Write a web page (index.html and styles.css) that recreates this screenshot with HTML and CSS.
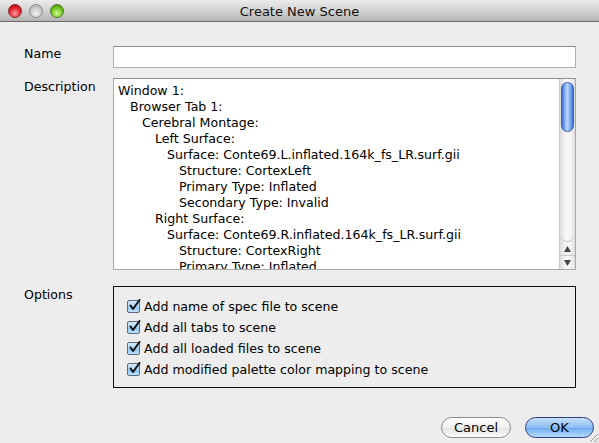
FILE: index.html
```html
<!DOCTYPE html>
<html>
<head>
<meta charset="utf-8">
<link rel="stylesheet" href="styles.css">
</head>
<body>
<div class="window">
  <div class="titlebar">
    <div class="lights">
      <span class="light red"></span>
      <span class="light gray"></span>
      <span class="light green"></span>
    </div>
    <div class="title">Create New Scene</div>
  </div>
  <div class="content">
    <div class="row name-row">
      <div class="label">Name</div>
      <div class="input"></div>
    </div>
    <div class="row desc-row">
      <div class="label">Description</div>
      <div class="textarea">
        <div class="text">
          <div class="l0">Window 1:</div>
          <div class="l1">Browser Tab 1:</div>
          <div class="l2">Cerebral Montage:</div>
          <div class="l3">Left Surface:</div>
          <div class="l4">Surface: Conte69.L.inflated.164k_fs_LR.surf.gii</div>
          <div class="l5">Structure: CortexLeft</div>
          <div class="l5">Primary Type: Inflated</div>
          <div class="l5">Secondary Type: Invalid</div>
          <div class="l3">Right Surface:</div>
          <div class="l4">Surface: Conte69.R.inflated.164k_fs_LR.surf.gii</div>
          <div class="l5">Structure: CortexRight</div>
          <div class="l5">Primary Type: Inflated</div>
        </div>
        <div class="scrollbar">
          <div class="track">
            <div class="thumb"></div>
          </div>
          <div class="arrow up"><svg width="7" height="6" viewBox="0 0 7 6"><path d="M3.5 0 L7 6 L0 6 Z" fill="#444"/></svg></div>
          <div class="arrow down"><svg width="7" height="6" viewBox="0 0 7 6"><path d="M0 0 L7 0 L3.5 6 Z" fill="#444"/></svg></div>
        </div>
      </div>
    </div>
    <div class="row opt-row">
      <div class="label">Options</div>
      <div class="options">
        <div class="opt"><span class="cb"><svg width="13" height="13" viewBox="0 0 13 13"><path d="M2.5 6.5 L5 10 L11.5 1" fill="none" stroke="#111" stroke-width="2" stroke-linecap="round" stroke-linejoin="round"/></svg></span>Add name of spec file to scene</div>
        <div class="opt"><span class="cb"><svg width="13" height="13" viewBox="0 0 13 13"><path d="M2.5 6.5 L5 10 L11.5 1" fill="none" stroke="#111" stroke-width="2" stroke-linecap="round" stroke-linejoin="round"/></svg></span>Add all tabs to scene</div>
        <div class="opt"><span class="cb"><svg width="13" height="13" viewBox="0 0 13 13"><path d="M2.5 6.5 L5 10 L11.5 1" fill="none" stroke="#111" stroke-width="2" stroke-linecap="round" stroke-linejoin="round"/></svg></span>Add all loaded files to scene</div>
        <div class="opt"><span class="cb"><svg width="13" height="13" viewBox="0 0 13 13"><path d="M2.5 6.5 L5 10 L11.5 1" fill="none" stroke="#111" stroke-width="2" stroke-linecap="round" stroke-linejoin="round"/></svg></span>Add modified palette color mapping to scene</div>
      </div>
    </div>
    <div class="buttons">
      <div class="btn cancel">Cancel</div>
      <div class="btn ok">OK</div>
    </div>
  </div>
  <div class="grip"><svg width="12" height="12" viewBox="0 0 12 12"><path d="M11 3 L3 11 M11 7 L7 11 M11 10 L10 11" stroke="#999" stroke-width="1"/></svg></div>
</div>
</body>
</html>
```

FILE: styles.css
```css
html, body {
  margin: 0;
  padding: 0;
}
body {
  width: 599px;
  height: 443px;
  overflow: hidden;
  font-family: "DejaVu Sans", "Liberation Sans", sans-serif;
  font-size: 12.6px;
  color: #000;
}
.window {
  position: relative;
  width: 599px;
  height: 443px;
  background: #ededed;
}
.titlebar {
  position: relative;
  height: 21px;
  border-bottom: 1px solid #6a6a6a;
  background: linear-gradient(#ebebeb, #d3d3d3 50%, #b4b4b4);
  display: flex;
  align-items: center;
  justify-content: center;
}
.lights {
  position: absolute;
  left: 8px;
  top: 4px;
  display: flex;
  gap: 7px;
}
.light {
  width: 14px;
  height: 14px;
  border-radius: 50%;
  box-sizing: border-box;
}
.red {
  background: radial-gradient(circle at 50% 70%, #ff9a9a, #e0202a 55%, #a00010);
  border: 1px solid #8a2a2a;
}
.gray {
  background: radial-gradient(circle at 50% 70%, #f2f2f2, #c8c8c8 55%, #a5a5a5);
  border: 1px solid #8c8c8c;
}
.green {
  background: radial-gradient(circle at 50% 70%, #d6ff9a, #70c020 55%, #3a8a00);
  border: 1px solid #4a7a2a;
}
.title {
  font-size: 13px;
  color: #111;
  padding-top: 1px;
}
.content {
  padding: 24px 23px 0 24px;
  display: flex;
  flex-direction: column;
}
.row {
  display: flex;
}
.label {
  width: 89px;
  flex: none;
}
.input {
  width: 463px;
  height: 22px;
  box-sizing: border-box;
  background: #fff;
  border: 1px solid #b0b0b0;
  border-top-color: #8e8e8e;
}
.name-row .label {
  padding-top: 0;
  line-height: 15px;
}
.desc-row {
  margin-top: 10px;
}
.desc-row .label {
  padding-top: 1px;
}
.textarea {
  width: 463px;
  height: 192px;
  box-sizing: border-box;
  background: #fff;
  border: 1px solid #a8a8a8;
  border-top-color: #8e8e8e;
  display: flex;
  overflow: hidden;
}
.text {
  flex: 1;
  padding: 4px 0 0 4px;
  line-height: 16px;
  white-space: nowrap;
  overflow: hidden;
}
.l1 { padding-left: 12px; }
.l2 { padding-left: 24px; }
.l3 { padding-left: 37px; }
.l4 { padding-left: 49px; }
.l5 { padding-left: 61px; }
.scrollbar {
  width: 15px;
  flex: none;
  border-left: 1px solid #c8c8c8;
  display: flex;
  flex-direction: column;
  background: linear-gradient(90deg, #dcdcdc, #f8f8f8 40%, #f4f4f4 70%, #dedede);
}
.track {
  flex: 1;
  padding-top: 3px;
  border-bottom: 1px solid #c8c8c8;
  border-radius: 0 0 8px 8px;
}
.thumb {
  width: 13px;
  margin-left: 1px;
  height: 50px;
  box-sizing: border-box;
  border-radius: 7px;
  border: 1px solid #3a62a8;
  background: linear-gradient(90deg, #3c6fd8, #9cc2f8 35%, #b8d6fb 50%, #7ba8ee 75%, #3f74d6);
}
.arrow {
  height: 13px;
  display: flex;
  align-items: center;
  justify-content: center;
}
.arrow.up {
  border-bottom: 1px solid #c8c8c8;
}
.opt-row {
  margin-top: 16px;
}
.opt-row .label {
  padding-top: 1px;
}
.options {
  width: 463px;
  height: 102px;
  box-sizing: border-box;
  border: 1px solid #111;
  padding: 9px 0 0 13px;
}
.opt {
  height: 21px;
  display: flex;
  align-items: center;
}
.cb {
  width: 13px;
  height: 13px;
  box-sizing: border-box;
  border: 1px solid #5a6a80;
  border-radius: 2px;
  background: linear-gradient(#d6ecfc, #a8d2f4 50%, #8cc2ee 51%, #c0e2fb);
  margin-right: 4px;
  position: relative;
  flex: none;
}
.cb svg {
  position: absolute;
  left: 0;
  top: -2px;
}
.buttons {
  display: flex;
  justify-content: flex-end;
  gap: 14px;
  margin-top: 29px;
  margin-right: -18px;
}
.btn {
  height: 21px;
  box-sizing: border-box;
  border-radius: 11px;
  display: flex;
  align-items: center;
  justify-content: center;
  font-size: 13px;
}
.cancel {
  width: 70px;
  border: 1px solid #8a8a8a;
  background: linear-gradient(#ffffff, #f0f0f0 50%, #e2e2e2 51%, #fbfbfb);
}
.ok {
  width: 69px;
  border: 1px solid #2b3f8a;
  background: linear-gradient(#c8e0fb, #8dbcf2 50%, #6ea8ee 51%, #b8dcfc);
}
.grip {
  position: absolute;
  right: 0;
  bottom: 0;
  width: 12px;
  height: 12px;
}
```
